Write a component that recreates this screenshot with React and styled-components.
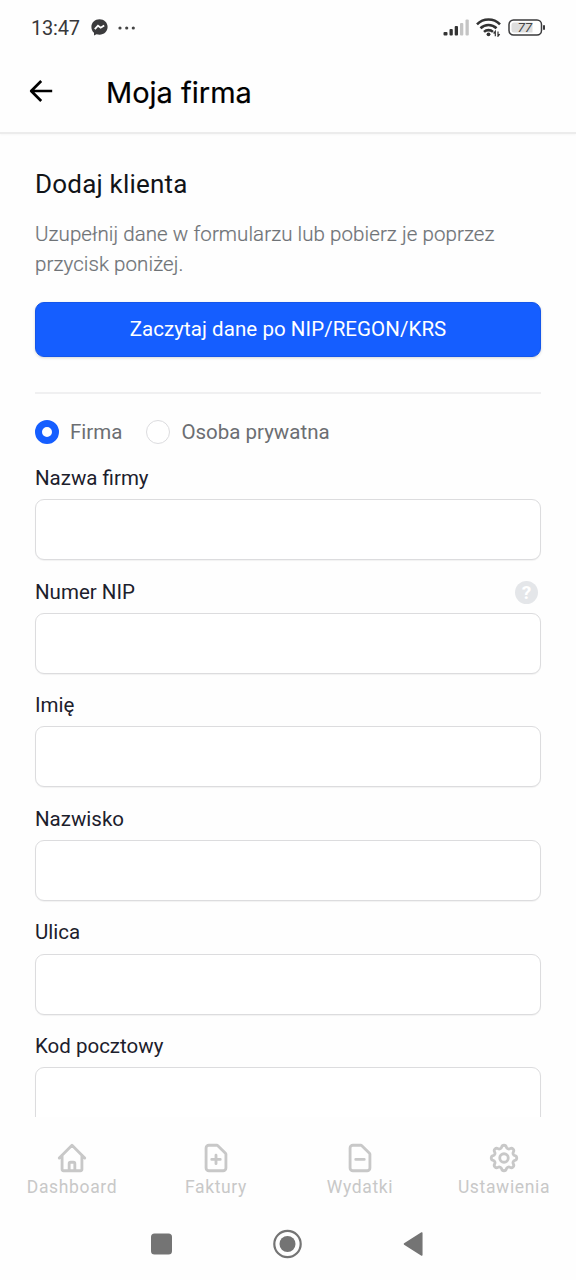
import React, { useState } from "react";
import styled, { createGlobalStyle } from "styled-components";

const GlobalStyle = createGlobalStyle`
  * {
    box-sizing: border-box;
  }

  body {
    margin: 0;
    background: #fefefe;
    font-family: Roboto, "Noto Sans", sans-serif;
  }
`;

const Screen = styled.div`
  display: flex;
  flex-direction: column;
  width: 576px;
  height: 1280px;
  overflow: hidden;
`;

const StatusBar = styled.div`
  display: flex;
  flex-shrink: 0;
  align-items: center;
  height: 55px;
  padding: 0 30px 0 31px;
  color: #38383a;
`;

const Clock = styled.span`
  width: 60px;
  font-size: 20px;
  line-height: 24px;
  letter-spacing: -0.2px;
`;

const StatusIcons = styled.div`
  display: flex;
  align-items: center;
  margin-left: auto;
  gap: 7px;
`;

const Header = styled.header`
  display: flex;
  flex-shrink: 0;
  align-items: center;
  height: 79px;
  padding: 0 28px 2px;
  border-bottom: 2px solid #ececec;
  box-shadow: 0 1px 2px rgba(0, 0, 0, 0.03);
`;

const BackButton = styled.button`
  display: flex;
  width: 78px;
  padding: 0 0 3px;
  border: none;
  background: transparent;
  cursor: pointer;
`;

const Title = styled.h1`
  margin: 0;
  color: #000;
  font-family: Inter, sans-serif;
  font-size: 29px;
  font-weight: 400;
  line-height: 36px;
  -webkit-text-stroke: 0.2px #000;
`;

const Content = styled.main`
  flex-shrink: 0;
  height: 983px;
  padding: 34px 35px 0;
  overflow: hidden;
`;

const Heading = styled.h2`
  margin: 0;
  color: #111418;
  font-size: 26px;
  font-weight: 400;
  line-height: 32px;
  letter-spacing: 0.2px;
`;

const Description = styled.p`
  margin: 19px 0 23px;
  color: #6f7377;
  font-size: 20.5px;
  font-weight: 300;
  line-height: 30px;
  letter-spacing: 0.07px;
  -webkit-text-stroke: 0.2px #6f7377;
`;

const PrimaryButton = styled.button`
  display: block;
  width: 100%;
  height: 55px;
  padding: 0 0 1px;
  border: 1px solid #1456ea;
  border-radius: 9px;
  background: #155eff;
  box-shadow: 0 1px 3px rgba(0, 0, 0, 0.16);
  color: #fff;
  font-family: inherit;
  font-size: 20.5px;
  letter-spacing: 0.06px;
  cursor: pointer;
`;

const Divider = styled.hr`
  height: 2px;
  margin: 35px 0 24px;
  border: none;
  background: #f0f0f1;
`;

const RadioGroup = styled.div`
  display: flex;
  align-items: center;
  height: 28px;
  margin-bottom: 18px;
  gap: 24px;
`;

const RadioLabel = styled.label`
  display: flex;
  align-items: center;
  color: #6c6e72;
  font-size: 20.5px;
  line-height: 28px;
  gap: 11px;
`;

const Radio = styled.input`
  appearance: none;
  width: 24px;
  height: 24px;
  margin: 0;
  border: ${({ checked }) => (checked ? "7px solid #155eff" : "1.5px solid #dcdcdf")};
  border-radius: 50%;
  background: #fff;
`;

const Field = styled.div`
  height: 113.6px;
`;

const FieldHead = styled.div`
  display: flex;
  align-items: center;
  justify-content: space-between;
  height: 29px;
  padding-right: 3px;
  margin-bottom: 6.2px;
`;

const Label = styled.label`
  color: #1c202c;
  font-size: 20.5px;
  line-height: 29px;
`;

const Help = styled.span`
  display: flex;
  align-items: center;
  justify-content: center;
  width: 23px;
  height: 23px;
  border-radius: 50%;
  background: #e4e6e9;
  color: #fff;
  font-size: 19px;
  font-weight: 700;
  line-height: 23px;
`;

const Input = styled.input`
  display: block;
  width: 100%;
  height: 61px;
  padding: 0 16px;
  border: 1.5px solid #dcdcde;
  border-radius: 9px;
  outline: none;
  background: #fff;
  box-shadow: 0 1px 1px rgba(0, 0, 0, 0.05);
  font: inherit;
`;

const TabBar = styled.nav`
  display: grid;
  flex-shrink: 0;
  grid-template-columns: repeat(4, 1fr);
  height: 91px;
  padding-top: 24px;
`;

const Tab = styled.a`
  display: flex;
  flex-direction: column;
  align-items: center;
  color: #c8c8c8;
  font-size: 17.5px;
  line-height: 24px;
  letter-spacing: 0.65px;
`;

const SystemBar = styled.div`
  display: flex;
  align-items: center;
  justify-content: space-between;
  height: 72px;
  padding: 0 153px 0 151px;
`;

const MessengerIcon = () => (
  <svg width="17" height="17" viewBox="0 0 17 17">
    <path
      d="M8.5.3C3.9.3.4 3.6.4 8c0 2.4 1 4.4 2.6 5.8v2.7l2.5-1.2c1 .3 2 .4 3 .4 4.6 0 8.1-3.3 8.1-7.7S13.1.3 8.5.3z"
      fill="#3b3b3d"
    />
    <path d="M3.8 10.2l3.2-3.5 2.7 2 3.5-2.2" fill="none" stroke="#fff" strokeWidth="1.8" />
  </svg>
);

const Dots = styled.svg`
  margin-left: 10px;
`;

const DotsIcon = () => (
  <Dots width="18" height="4" viewBox="0 0 18 4">
    <g fill="#444">
      <circle cx="2" cy="2" r="1.6" />
      <circle cx="8.7" cy="2" r="1.6" />
      <circle cx="15.3" cy="2" r="1.6" />
    </g>
  </Dots>
);

const SignalIcon = () => (
  <svg width="26" height="17" viewBox="0 0 26 17">
    <g fill="#333">
      <rect x="0.5" y="13" width="4" height="3.5" rx="1" />
      <rect x="6.5" y="10" width="3.3" height="6.5" rx="1" />
      <rect x="11.7" y="7" width="3.3" height="9.5" rx="1" />
    </g>
    <g fill="#c4c4c4">
      <rect x="17" y="4" width="3.3" height="12.5" rx="1" />
      <rect x="22.5" y="0.5" width="3.3" height="16" rx="1" />
    </g>
  </svg>
);

const WifiIcon = () => (
  <svg width="25" height="19" viewBox="0 0 25 19">
    <g fill="none" stroke="#333" strokeWidth="2.6">
      <path d="M1 6.3a16.3 16.3 0 0 1 23 0" />
      <path d="M4.5 10.2a11.5 11.5 0 0 1 16 0" />
      <path d="M8 13.9a6.6 6.6 0 0 1 9 0" />
    </g>
    <circle cx="12.5" cy="16.3" r="1.9" fill="#333" />
    <path d="M19.3 18.200v-4.700l-1.700 2M22 13.500v4.700l1.700-2" fill="none" stroke="#333" strokeWidth="1.2" />
  </svg>
);

const BatteryIcon = () => (
  <svg width="38" height="17" viewBox="0 0 38 17">
    <rect x="1" y="1" width="32.5" height="15" rx="4.5" fill="#fff" stroke="#3b3b3d" strokeWidth="1.5" />
    <path d="M6 3.5h18.500v10H6a2.500 2.500 0 0 1-2.500-2.500V6A2.500 2.500 0 0 1 6 3.500z" fill="#dedede" />
    <rect x="35" y="6" width="2" height="5" rx="1" fill="#3b3b3d" />
    <text
      x="16.800"
      y="13.200"
      textAnchor="middle"
      fill="#444"
      fontSize="13.5"
      fontStyle="italic"
      fontFamily="Roboto"
    >
      77
    </text>
  </svg>
);

const BackIcon = () => (
  <svg width="26" height="26" viewBox="0 0 26 26">
    <path
      d="M13.2 3L3.2 13l10 10M3.200 13h21"
      fill="none"
      stroke="#000"
      strokeWidth="2.7"
      strokeLinejoin="round"
    />
  </svg>
);

const TabIcon = ({ d }) => (
  <svg
    width="34"
    height="34"
    viewBox="0 0 24 24"
    fill="none"
    stroke="currentColor"
    strokeWidth="2"
    strokeLinecap="round"
    strokeLinejoin="round"
  >
    <path d={d} />
  </svg>
);

const FILE_PATH =
  "M17 21H7a2 2 0 01-2-2V5a2 2 0 012-2h5.586a1 1 0 01.707.293l5.414 5.414a1 1 0 01.293.707V19a2 2 0 01-2 2z";

const tabs = [
  {
    name: "Dashboard",
    d: "M3 12l2-2m0 0l7-7 7 7M5 10v10a1 1 0 001 1h3m10-11l2 2m-2-2v10a1 1 0 01-1 1h-3m-6 0a1 1 0 001-1v-4a1 1 0 011-1h2a1 1 0 011 1v4a1 1 0 001 1m-6 0h6",
  },
  { name: "Faktury", d: `${FILE_PATH}M9 13h6m-3-3v6` },
  { name: "Wydatki", d: `${FILE_PATH}M9 13h6` },
  {
    name: "Ustawienia",
    d: "M10.325 4.317c.426-1.756 2.924-1.756 3.35 0a1.724 1.724 0 002.573 1.066c1.543-.94 3.31.826 2.37 2.37a1.724 1.724 0 001.065 2.572c1.756.426 1.756 2.924 0 3.35a1.724 1.724 0 00-1.066 2.573c.94 1.543-.826 3.31-2.37 2.37a1.724 1.724 0 00-2.572 1.065c-.426 1.756-2.924 1.756-3.35 0a1.724 1.724 0 00-2.573-1.066c-1.543.94-3.31-.826-2.37-2.37a1.724 1.724 0 00-1.065-2.572c-1.756-.426-1.756-2.924 0-3.35a1.724 1.724 0 001.066-2.573c-.94-1.543.826-3.31 2.37-2.37.996.608 2.296.07 2.572-1.065zM15 12a3 3 0 11-6 0 3 3 0 016 0z",
  },
];

const fields = [
  { id: "company", label: "Nazwa firmy" },
  { id: "nip", label: "Numer NIP", help: true },
  { id: "firstName", label: "Imię" },
  { id: "lastName", label: "Nazwisko" },
  { id: "street", label: "Ulica" },
  { id: "postcode", label: "Kod pocztowy" },
];

const App = () => {
  const [clientType, setClientType] = useState("company");
  const [formData, setFormData] = useState({});

  const handleChange = (event) => {
    setFormData({ ...formData, [event.target.name]: event.target.value });
  };

  return (
    <Screen>
      <GlobalStyle />
      <StatusBar>
        <Clock>13:47</Clock>
        <MessengerIcon />
        <DotsIcon />
        <StatusIcons>
          <SignalIcon />
          <WifiIcon />
          <BatteryIcon />
        </StatusIcons>
      </StatusBar>

      <Header>
        <BackButton type="button" aria-label="Wstecz">
          <BackIcon />
        </BackButton>
        <Title>Moja firma</Title>
      </Header>

      <Content>
        <Heading>Dodaj klienta</Heading>
        <Description>
          Uzupełnij dane w formularzu lub pobierz je poprzez
          <br />
          przycisk poniżej.
        </Description>
        <PrimaryButton type="button">Zaczytaj dane po NIP/REGON/KRS</PrimaryButton>
        <Divider />

        <RadioGroup>
          <RadioLabel>
            <Radio
              type="radio"
              name="clientType"
              checked={clientType === "company"}
              onChange={() => setClientType("company")}
            />
            Firma
          </RadioLabel>
          <RadioLabel>
            <Radio
              type="radio"
              name="clientType"
              checked={clientType === "person"}
              onChange={() => setClientType("person")}
            />
            Osoba prywatna
          </RadioLabel>
        </RadioGroup>

        {fields.map(({ id, label, help }) => (
          <Field key={id}>
            <FieldHead>
              <Label htmlFor={id}>{label}</Label>
              {help && <Help>?</Help>}
            </FieldHead>
            <Input id={id} name={id} value={formData[id] || ""} onChange={handleChange} />
          </Field>
        ))}
      </Content>

      <TabBar>
        {tabs.map(({ name, d }) => (
          <Tab key={name}>
            <TabIcon d={d} />
            {name}
          </Tab>
        ))}
      </TabBar>

      <SystemBar>
        <svg width="22" height="22" viewBox="0 0 22 22">
          <rect x="0" y="0.5" width="21" height="21" rx="3.5" fill="#747474" />
        </svg>
        <svg width="30" height="30" viewBox="0 0 30 30">
          <circle cx="14.5" cy="15" r="13.2" fill="none" stroke="#747474" strokeWidth="2.2" />
          <circle cx="14.5" cy="15" r="8" fill="#747474" />
        </svg>
        <svg width="20" height="25" viewBox="0 0 20 25">
          <path
            d="M1.500 12L18.800 1v22z"
            fill="#747474"
            stroke="#747474"
            strokeWidth="1.5"
            strokeLinejoin="round"
          />
        </svg>
      </SystemBar>
    </Screen>
  );
};

export default App;
